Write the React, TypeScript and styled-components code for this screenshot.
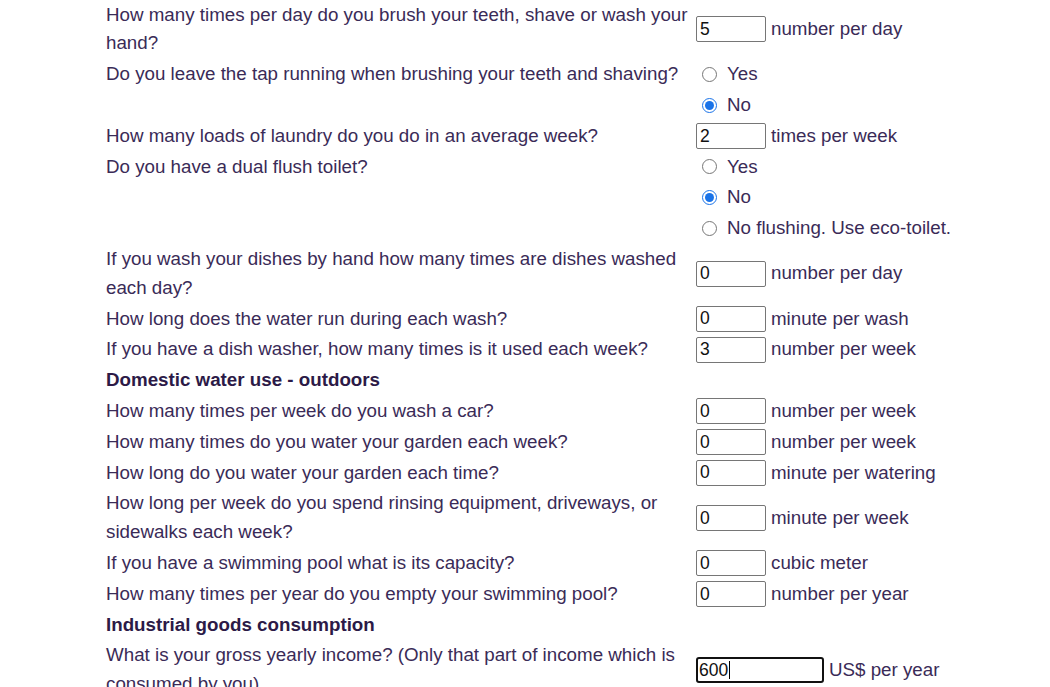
import React from "react";
import styled, { createGlobalStyle } from "styled-components";

const GlobalStyle = createGlobalStyle`
  html, body {
    margin: 0;
    padding: 0;
    background: #ffffff;
  }
  body {
    font-family: "Liberation Sans", Arial, sans-serif;
    color: #3a2b57;
  }
`;

const Page = styled.div`
  width: 1050px;
  height: 687px;
  overflow: hidden;
  padding: 0.6px 0 0 106px;
  box-sizing: border-box;
`;

const Form = styled.div`
  display: grid;
  grid-template-columns: 588px auto;
  column-gap: 2px;
  row-gap: 2px;
  align-items: center;
  font-size: 18.75px;
  line-height: 28.8px;
`;

const Question = styled.div`
  color: #3a2b57;
`;

const Heading = styled.div`
  grid-column: 1 / span 2;
  font-weight: bold;
  color: #2c1a47;
`;

const Answer = styled.div`
  display: flex;
  align-items: center;
  gap: 5px;
`;

const NumberInput = styled.input<{ $wide?: boolean; $focused?: boolean }>`
  box-sizing: border-box;
  width: ${(p) => (p.$wide ? "128px" : "70px")};
  height: 26px;
  margin: 0;
  padding: 0 ${(p) => (p.$focused ? "1px" : "3px")};
  border: ${(p) => (p.$focused ? "2px solid #111111" : "1px solid #767676")};
  border-radius: ${(p) => (p.$focused ? "3px" : "2px")};
  font-family: "Liberation Sans", Arial, sans-serif;
  font-size: 17.5px;
  color: #111111;
  background: #ffffff;
  outline: none;
`;

const FieldWrap = styled.span`
  position: relative;
  display: inline-flex;
`;

const Caret = styled.span`
  position: absolute;
  left: 33px;
  top: 4px;
  width: 1px;
  height: 18px;
  background: #000000;
`;

const Unit = styled.span`
  color: #3a2b57;
`;

const RadioOption = styled.label`
  display: flex;
  align-items: center;
  gap: 10px;
  padding-left: 6px;
  color: #3a2b57;
`;

const Radio = styled.input`
  width: 15px;
  height: 15px;
  margin: 0;
  accent-color: #1a73e8;
`;

type Row =
  | { kind: "field"; q: string; value: string; unit: string; wide?: boolean; focused?: boolean }
  | { kind: "radio"; q?: string; group: string; label: string; checked?: boolean }
  | { kind: "heading"; text: string };

const rows: Row[] = [
  { kind: "field", q: "How many times per day do you brush your teeth, shave or wash your hand?", value: "5", unit: "number per day" },
  { kind: "radio", q: "Do you leave the tap running when brushing your teeth and shaving?", group: "tap", label: "Yes" },
  { kind: "radio", group: "tap", label: "No", checked: true },
  { kind: "field", q: "How many loads of laundry do you do in an average week?", value: "2", unit: "times per week" },
  { kind: "radio", q: "Do you have a dual flush toilet?", group: "toilet", label: "Yes" },
  { kind: "radio", group: "toilet", label: "No", checked: true },
  { kind: "radio", group: "toilet", label: "No flushing. Use eco-toilet." },
  { kind: "field", q: "If you wash your dishes by hand how many times are dishes washed each day?", value: "0", unit: "number per day" },
  { kind: "field", q: "How long does the water run during each wash?", value: "0", unit: "minute per wash" },
  { kind: "field", q: "If you have a dish washer, how many times is it used each week?", value: "3", unit: "number per week" },
  { kind: "heading", text: "Domestic water use - outdoors" },
  { kind: "field", q: "How many times per week do you wash a car?", value: "0", unit: "number per week" },
  { kind: "field", q: "How many times do you water your garden each week?", value: "0", unit: "number per week" },
  { kind: "field", q: "How long do you water your garden each time?", value: "0", unit: "minute per watering" },
  { kind: "field", q: "How long per week do you spend rinsing equipment, driveways, or sidewalks each week?", value: "0", unit: "minute per week" },
  { kind: "field", q: "If you have a swimming pool what is its capacity?", value: "0", unit: "cubic meter" },
  { kind: "field", q: "How many times per year do you empty your swimming pool?", value: "0", unit: "number per year" },
  { kind: "heading", text: "Industrial goods consumption" },
  { kind: "field", q: "What is your gross yearly income? (Only that part of income which is consumed by you)", value: "600", unit: "US$ per year", wide: true, focused: true },
];

export default function App() {
  return (
    <>
      <GlobalStyle />
      <Page>
        <Form>
          {rows.map((row, i) => {
            if (row.kind === "heading") {
              return <Heading key={i}>{row.text}</Heading>;
            }
            if (row.kind === "radio") {
              return (
                <React.Fragment key={i}>
                  <Question>{row.q ?? ""}</Question>
                  <RadioOption>
                    <Radio type="radio" name={row.group} defaultChecked={row.checked} />
                    {row.label}
                  </RadioOption>
                </React.Fragment>
              );
            }
            return (
              <React.Fragment key={i}>
                <Question>{row.q}</Question>
                <Answer>
                  <FieldWrap>
                    <NumberInput
                      type="text"
                      defaultValue={row.value}
                      $wide={row.wide}
                      $focused={row.focused}
                    />
                    {row.focused && <Caret />}
                  </FieldWrap>
                  <Unit>{row.unit}</Unit>
                </Answer>
              </React.Fragment>
            );
          })}
        </Form>
      </Page>
    </>
  );
}
